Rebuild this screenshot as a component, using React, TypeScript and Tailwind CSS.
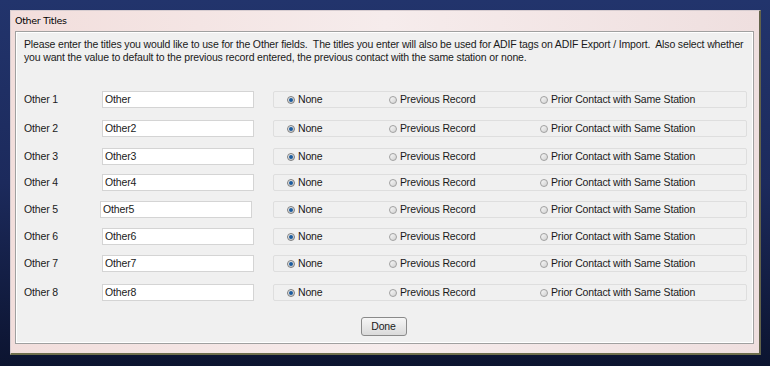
const rows = [
  { label: "Other 1", value: "Other", rowClass: "mt-[27px]", inputClass: "" },
  { label: "Other 2", value: "Other2", rowClass: "mt-[12px]", inputClass: "" },
  { label: "Other 3", value: "Other3", rowClass: "mt-[11px]", inputClass: "" },
  { label: "Other 4", value: "Other4", rowClass: "mt-[9px]", inputClass: "" },
  { label: "Other 5", value: "Other5", rowClass: "mt-[10px]", inputClass: "-ml-[2px] mr-[2px]" },
  { label: "Other 6", value: "Other6", rowClass: "mt-[10px]", inputClass: "" },
  { label: "Other 7", value: "Other7", rowClass: "mt-[10px]", inputClass: "" },
  { label: "Other 8", value: "Other8", rowClass: "mt-[12px]", inputClass: "" },
];

function Radio({ checked }: { checked: boolean }) {
  return checked ? (
    <span className="flex h-[8px] w-[8px] shrink-0 items-center justify-center rounded-full border border-[#7e7e7e] bg-gradient-to-br from-[#f4f4f4] to-[#c4c4c4]">
      <span className="h-[4px] w-[4px] rounded-full bg-[#1c5c9e]" />
    </span>
  ) : (
    <span className="h-[8px] w-[8px] shrink-0 rounded-full border border-[#a0a0a0] bg-gradient-to-br from-[#f8f8f8] to-[#d2d2d2]" />
  );
}

function Option({ label, checked, width }: { label: string; checked: boolean; width: string }) {
  return (
    <div className={`flex items-center gap-[3px] ${width}`}>
      <Radio checked={checked} />
      <span>{label}</span>
    </div>
  );
}

export default function App() {
  return (
    <div className="h-[366px] w-[770px] overflow-hidden bg-gradient-to-b from-[#22346c] via-[#1c2a5c] to-[#0c1430] pb-[11px] pl-[10px] pr-[9px] pt-[10px] font-['Liberation_Sans',Arial,sans-serif] text-[10.5px] tracking-[-0.15px] text-[#1a1a1a]">
      <div className="flex h-full flex-col border-b-2 border-l border-r-2 border-t border-b-[#6f6f4c] border-l-[#d6ccd0] border-r-[#62624a] border-t-[#d6ccd0] bg-gradient-to-r from-[#f2dedc] via-[#f6ecec] to-[#efdfdf]">
        <div className="flex h-[20px] items-center pl-[4px] font-['DejaVu_Sans',sans-serif] text-[9.5px] tracking-[-0.3px] text-black">
          Other Titles
        </div>
        <div className="mb-[9px] ml-[4px] mr-[5px] flex flex-1 flex-col border border-[#a0a0a0] bg-[#f0f0f0] pl-[8px] pt-[6px] shadow-[inset_1px_1px_0_#ffffff,inset_-1px_-1px_0_#ffffff]">
          <p className="leading-[13px]">
            Please enter the titles you would like to use for the Other fields.&nbsp; The titles you enter will also be used for ADIF tags on ADIF Export / Import.&nbsp; Also select whether
            <br />
            you want the value to default to the previous record entered, the previous contact with the same station or none.
          </p>

          {rows.map((row) => (
            <div key={row.label} className={`flex h-[17px] items-center ${row.rowClass}`}>
              <span className="w-[78px] shrink-0">{row.label}</span>
              <div className={`flex h-[17px] w-[152px] shrink-0 items-center border border-[#d4d4d4] bg-white pl-[2px] ${row.inputClass}`}>
                {row.value}
              </div>
              <div className="ml-[19px] flex h-[17px] w-[474px] shrink-0 items-center rounded-[2px] border border-[#dedede] pl-[13px]">
                <Option label="None" checked width="w-[102px]" />
                <Option label="Previous Record" checked={false} width="w-[151px]" />
                <Option label="Prior Contact with Same Station" checked={false} width="" />
              </div>
            </div>
          ))}

          <div className="mt-[16px] flex justify-center pr-[8px]">
            <button className="ml-[-2px] flex h-[19px] w-[46px] items-center justify-center rounded-[3px] border border-[#8a8a8a] bg-gradient-to-b from-[#f6f6f6] to-[#dadada]">
              Done
            </button>
          </div>
        </div>
      </div>
    </div>
  );
}
